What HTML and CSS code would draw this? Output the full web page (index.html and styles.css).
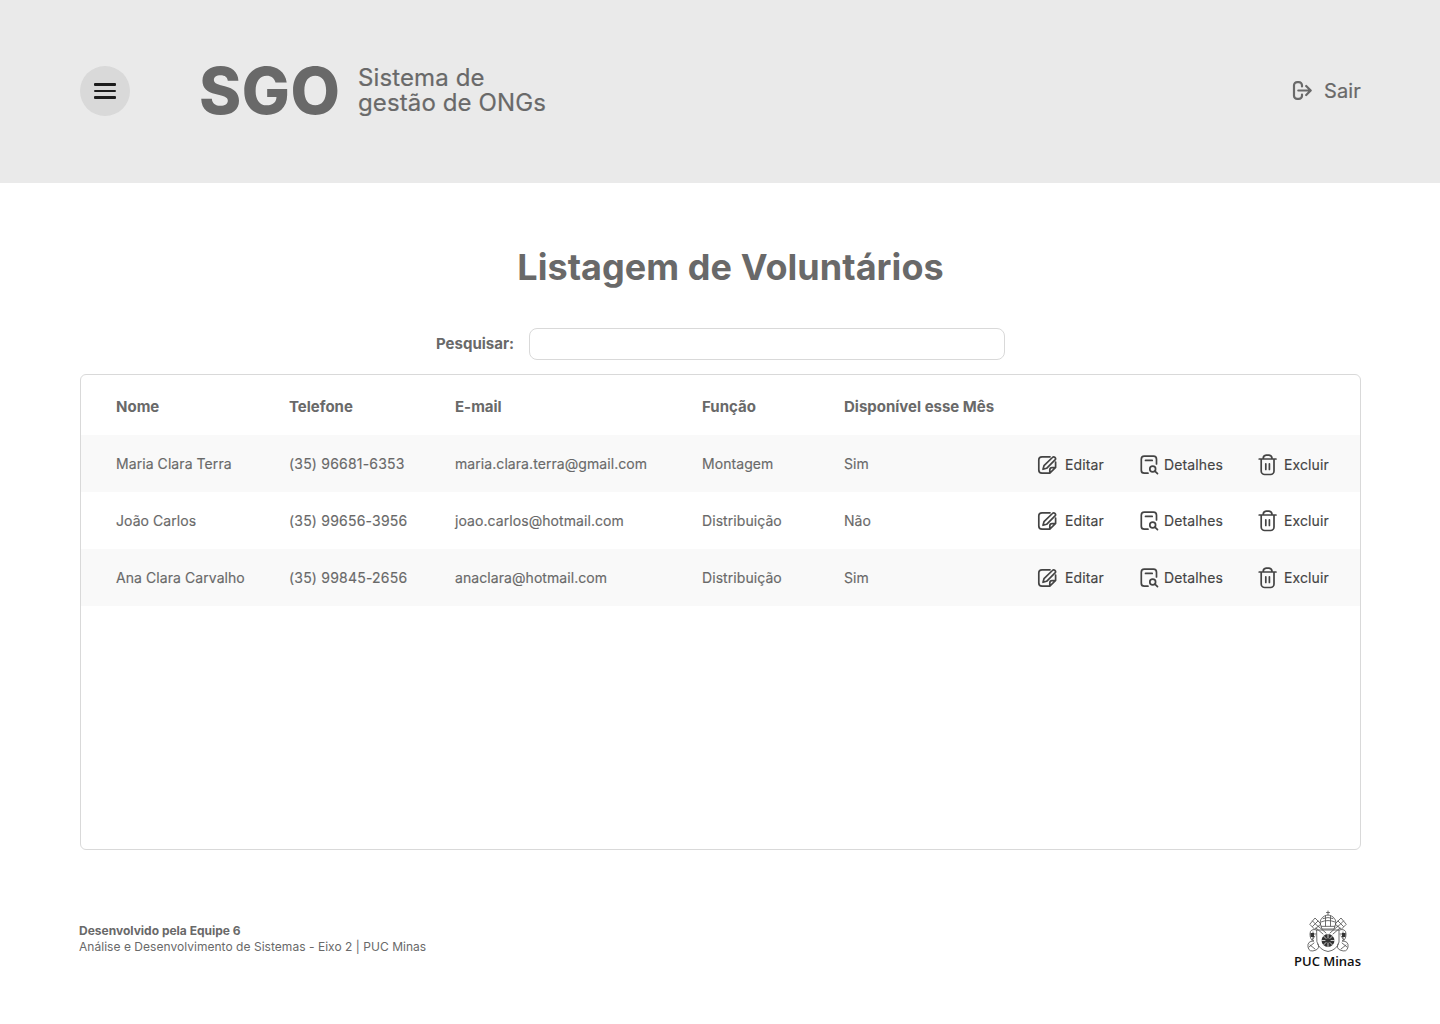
FILE: index.html
```html
<!DOCTYPE html>
<html lang="pt-BR">
<head>
<meta charset="utf-8">
<title>SGO - Listagem de Voluntários</title>
<link rel="stylesheet" href="styles.css">
</head>
<body>
<svg class="sprite" aria-hidden="true">
  <symbol id="edit" viewBox="0 0 20 20"><path d="M13 1.800H5A3.200 3.200 0 0 0 1.800 5V15A3.200 3.200 0 0 0 5 18.200H12.800L18.600 12.500V7M12.800 18V15A2.300 2.300 0 0 1 15.100 12.700H18.300"/><path d="M6 14.300 7 10.700 15.400 2.500A1.700 1.700 0 0 1 18 4.900L9.600 13.300Z"/></symbol>
  <symbol id="details" viewBox="0 0 20 20"><path d="M8 18.200H4.300A3 3 0 0 1 1.300 15.200V4.200A3 3 0 0 1 4.300 1.200H13.500A3 3 0 0 1 16.500 4.200V9M5.500 5.400H12.200"/><circle cx="12.700" cy="14" r="2.900"/><path d="M14.900 16.200 17.500 18.700"/></symbol>
  <symbol id="trash" viewBox="0 0 20 22"><path d="M1.200 5H18M3.200 5.200V17A3.500 3.500 0 0 0 6.700 20.500H12.500A3.500 3.500 0 0 0 16 17V5.200M5.200 4.800A3.500 3.500 0 0 1 8.200 1.200H11A3.500 3.500 0 0 1 14 4.800M7.800 9.800V15.500M11.400 9.800V15.500"/></symbol>
</svg>
<header class="topbar">
  <button class="menu" aria-label="Menu"><span></span><span></span><span></span></button>
  <div class="brand"><strong>SGO</strong><p>Sistema de<br>gestão de ONGs</p></div>
  <a class="logout"><svg viewBox="0 0 20 20"><path d="M10 5.500V4.300A3.200 3.200 0 0 0 6.800 1.100H5.200A3.200 3.200 0 0 0 2 4.300V14.700A3.200 3.200 0 0 0 5.200 17.900H6.800A3.200 3.200 0 0 0 10 14.700V13.500M6.300 9.500H18.500M14.200 5 18.700 9.500 14.200 14"/></svg><span>Sair</span></a>
</header>
<main>
  <h1>Listagem de Voluntários</h1>
  <div class="search"><label for="q">Pesquisar:</label><input id="q" type="text"></div>
  <section class="list">
    <div class="row head"><span>Nome</span><span>Telefone</span><span>E-mail</span><span>Função</span><span>Disponível esse Mês</span></div>
    <div class="row shaded first"><span>Maria Clara Terra</span><span class="phone">(35) 96681-6353</span><span>maria.clara.terra@gmail.com</span><span>Montagem</span><span>Sim</span>
      <a class="action"><svg class="icon-edit"><use href="#edit"/></svg>Editar</a><a class="action"><svg class="icon-details"><use href="#details"/></svg>Detalhes</a><a class="action"><svg class="icon-trash"><use href="#trash"/></svg>Excluir</a></div>
    <div class="row"><span>João Carlos</span><span class="phone">(35) 99656-3956</span><span>joao.carlos@hotmail.com</span><span>Distribuição</span><span>Não</span>
      <a class="action"><svg class="icon-edit"><use href="#edit"/></svg>Editar</a><a class="action"><svg class="icon-details"><use href="#details"/></svg>Detalhes</a><a class="action"><svg class="icon-trash"><use href="#trash"/></svg>Excluir</a></div>
    <div class="row shaded"><span>Ana Clara Carvalho</span><span class="phone">(35) 99845-2656</span><span>anaclara@hotmail.com</span><span>Distribuição</span><span>Sim</span>
      <a class="action"><svg class="icon-edit"><use href="#edit"/></svg>Editar</a><a class="action"><svg class="icon-details"><use href="#details"/></svg>Detalhes</a><a class="action"><svg class="icon-trash"><use href="#trash"/></svg>Excluir</a></div>
  </section>
</main>
<footer class="footer">
  <p><strong>Desenvolvido pela Equipe 6</strong><br>Análise e Desenvolvimento de Sistemas - Eixo 2 | PUC Minas</p>
  <div class="puc">
    <svg viewBox="0 0 44 42">
      <g class="line">
        <path d="M22 1V5M20.500 2.500H23.500M15 16C12 10 17 5.500 22 5C27 5.500 32 10 29 16ZM15 12Q22 9 29 12M17 8.500Q22 6.500 27 8.500M19.500 6V16M24.500 6V16M15 16L16 19H28L29 16"/>
        <path d="M4 14 9 8 15 14 9 19ZM40 14 35 8 29 14 35 19ZM6.500 11 12.500 17M12 11 6.500 16.500M37.500 11 31.500 17M32 11 37.500 16.500M12 16 20 23M32 16 24 23M10 18 17 24M34 18 27 24"/>
        <path d="M11 20H33V32Q31 40 22 41.500Q13 40 11 32ZM11 20Q4 18 4 24T8 31Q1 31 2 37T10 40Q14 38 12 34M33 20Q40 18 40 24T36 31Q43 31 42 37T34 40Q30 38 32 34M4 35 9 39M40 35 35 39M7 22V29M37 22V29M5 24H10M34 24H39M3 37 8 33M41 37 36 33M9 26 6 30M35 26 38 30"/>
      </g>
      <path class="solid" d="M4.500 23H8V27H4.500ZM36 23H39.500V27H36Z"/>
      <circle class="solid" cx="22" cy="30.500" r="6.500"/>
      <path class="rays" d="M22 24V28M22 33V37M15.500 30.500H19M25 30.500H28.500M17.500 26 20 28.500M24 32.500 26.500 35M26.500 26 24 28.500M20 32.500 17.500 35"/>
    </svg>
    <span>PUC Minas</span>
  </div>
</footer>
</body>
</html>
```
FILE: styles.css
```css
* { box-sizing: border-box; }
body { margin: 0; font-family: Inter, sans-serif; color: #696969; background: #fff; }
p, h1 { margin: 0; }
.sprite { display: none; }
svg { fill: none; stroke: currentColor; stroke-width: 1.7; stroke-linecap: round; stroke-linejoin: round; flex: none; }

.topbar { height: 183px; padding: 0 79px 2px 80px; background: #eaeaea; display: flex; align-items: center; }
.menu { width: 50px; height: 50px; margin-top: 1px; padding: 0; border: 0; border-radius: 50%; background: #d9d9d9; display: flex; flex-direction: column; align-items: center; justify-content: center; gap: 4px; }
.menu span { width: 22px; height: 2.6px; border-radius: 1px; background: #1c1c1c; }
.brand { display: flex; align-items: center; gap: 17px; margin-left: 69px; }
.brand strong { width: 142px; font-size: 64px; line-height: 76px; font-weight: 800; letter-spacing: .6px; }
.brand p { font-size: 24px; line-height: 25px; margin-bottom: 1px; letter-spacing: .12px; -webkit-text-stroke: .2px; }
.logout { margin-left: auto; display: flex; align-items: center; gap: 12px; font-size: 20px; line-height: 24px; letter-spacing: .15px; -webkit-text-stroke: .2px; }
.logout svg { width: 20px; height: 20px; stroke-width: 2.2; }

main { padding: 61px 79px 0 80px; }
h1 { font-size: 36px; line-height: 46px; font-weight: 700; text-align: center; padding-left: 20px; letter-spacing: .05px; }
.search { display: flex; align-items: center; gap: 15px; margin: 38px 0 14px 356px; }
.search label { font-size: 15px; font-weight: 700; line-height: 18px; }
.search input { width: 476px; height: 32px; padding: 0 12px; border: 1px solid #d9d9d9; border-radius: 8px; font: inherit; }
.list { height: 476px; border: 1px solid #d9d9d9; border-radius: 6px; }
.row { height: 57px; padding-left: 35px; display: grid; grid-template-columns: 173px 166px 247px 142px 193px 103px 118px 1fr; align-items: center; font-size: 14px; line-height: 18px; letter-spacing: .07px; -webkit-text-stroke: .15px; }
.head { height: 60px; padding-top: 4px; font-size: 15px; font-weight: 700; letter-spacing: 0; -webkit-text-stroke: 0; }
.phone { letter-spacing: .2px; }
.shaded { background: #f9f9f9; }
.action { display: flex; align-items: center; color: #444; letter-spacing: .12px; }
.first .action { padding-top: 2px; }
.icon-edit { width: 20px; height: 20px; margin-right: 8px; }
.icon-details { width: 20px; height: 20px; margin-right: 4px; }
.icon-trash { width: 20px; height: 22px; margin-right: 6px; }

.footer { padding: 60px 79px 0; display: flex; justify-content: space-between; }
.footer p { padding-top: 13px; font-size: 12px; line-height: 16px; letter-spacing: .035px; }
.footer p strong { letter-spacing: 0; }
.puc { width: 67px; color: #222; display: flex; flex-direction: column; align-items: center; }
.puc svg { width: 44px; height: 42px; }
.puc .line { stroke: #555; stroke-width: .85; }
.puc .solid { fill: #333; stroke: none; }
.puc .rays { stroke: #ddd; stroke-width: .9; }
.puc span { font: 600 13px/18px "Open Sans", sans-serif; white-space: nowrap; color: #111; }
```
